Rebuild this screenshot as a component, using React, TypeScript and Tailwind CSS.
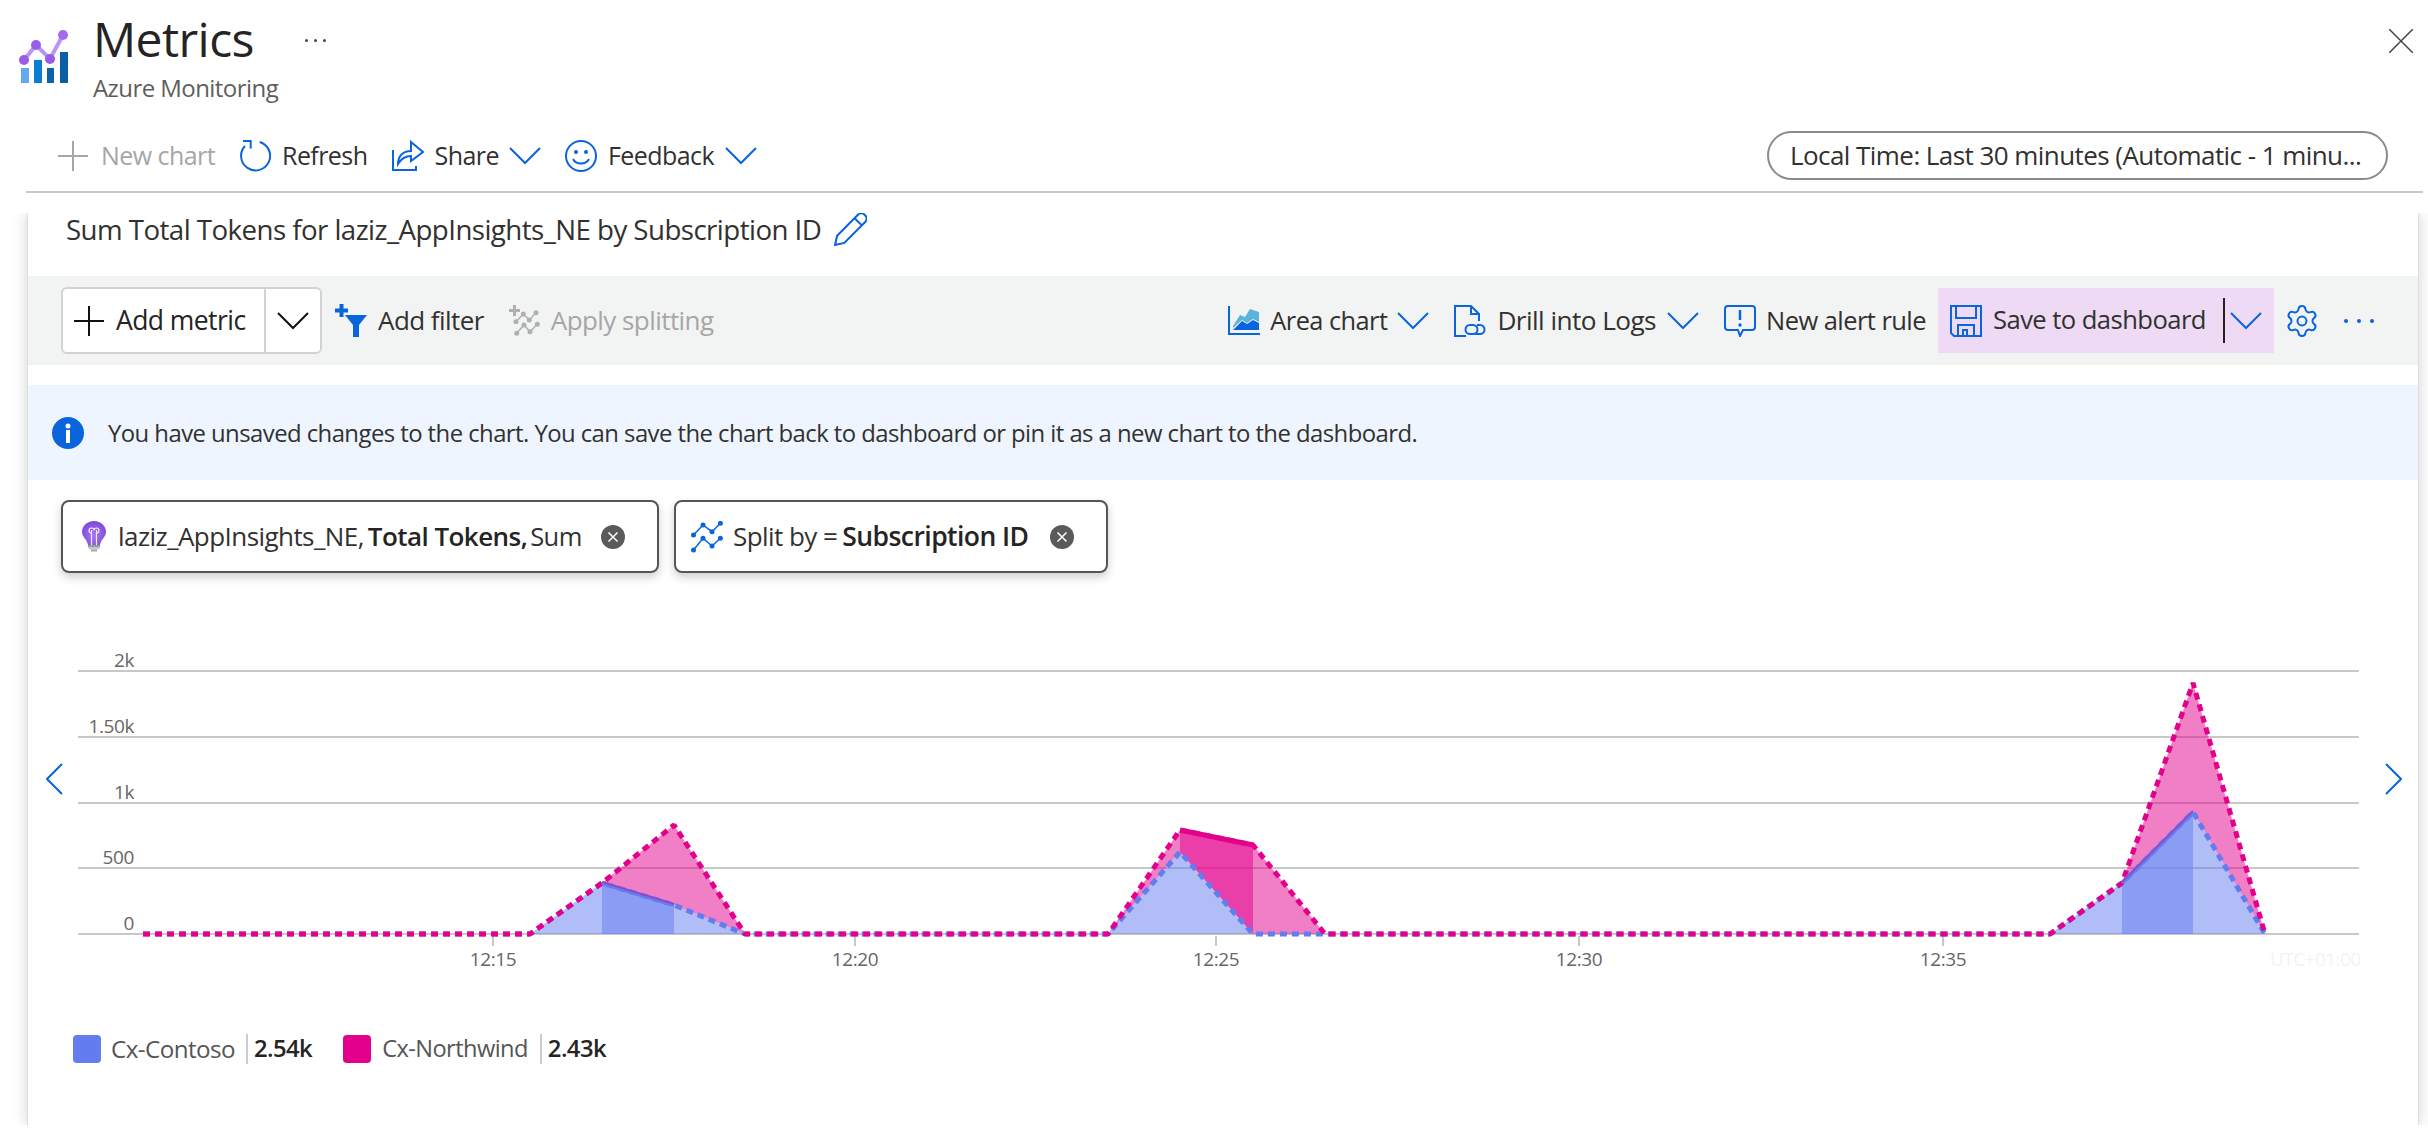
import { Settings } from 'lucide-react';

const blue = '#0a64dc';

function Chevron({ className = 'w-[32px] h-[18px]', color = blue }: { className?: string; color?: string }) {
  return (
    <svg viewBox="0 0 32 18" className={className} fill="none" stroke={color} strokeWidth="2">
      <path d="M1 1 L16 16 L31 1" />
    </svg>
  );
}

function LogoIcon() {
  return (
    <svg viewBox="18 30 54 55" className="w-[54px] h-[55px]">
      <rect x="21" y="68" width="8" height="15" fill="#64a8f0" />
      <rect x="34" y="60" width="8" height="23" fill="#0a7cd2" />
      <rect x="47" y="68" width="7" height="15" fill="#0a62a8" />
      <rect x="60" y="52" width="8" height="31" fill="#0a5ea8" />
      <polyline points="24,60 36,45 50,59 63,35" fill="none" stroke="#b796f9" strokeWidth="4" />
      <circle cx="24" cy="60" r="5" fill="#9a5be6" />
      <circle cx="36" cy="45" r="5" fill="#9a5be6" />
      <circle cx="50" cy="59" r="5" fill="#9a5be6" />
      <circle cx="63" cy="35" r="5" fill="#a46bee" />
    </svg>
  );
}

function PlusIcon({ color, size = 'w-[30px] h-[30px]' }: { color: string; size?: string }) {
  return (
    <svg viewBox="0 0 30 30" className={size} stroke={color} strokeWidth="2">
      <path d="M15 0V30M0 15H30" />
    </svg>
  );
}

function RefreshIcon() {
  return (
    <svg viewBox="0 0 32 32" className="w-[32px] h-[32px]" fill="none" stroke={blue} strokeWidth="2">
      <path d="M20.7 2 A14.5 14.5 0 1 1 6 6" />
      <path d="M4 1 H11.7 V8.5" />
    </svg>
  );
}

function ShareIcon() {
  return (
    <svg viewBox="0 0 32 32" className="w-[32px] h-[32px]" fill="none" stroke={blue} strokeWidth="2">
      <path d="M1 10 V30 H24 V26" />
      <path d="M6 24 C6 16 11 11 19 11 V2 L31 12 L19 21 V16 C13 16 9 19 6 24 Z" />
    </svg>
  );
}

function SmileIcon() {
  return (
    <svg viewBox="0 0 32 32" className="w-[32px] h-[32px]" fill="none" stroke={blue} strokeWidth="2">
      <circle cx="16" cy="16" r="15" />
      <circle cx="11" cy="12" r="2" fill={blue} stroke="none" />
      <circle cx="21" cy="12" r="2" fill={blue} stroke="none" />
      <path d="M8 19 C11 25 21 25 24 19" />
    </svg>
  );
}

function FilterIcon() {
  return (
    <svg viewBox="0 0 32 33" className="w-[32px] h-[33px]" fill={blue}>
      <path d="M4.5 0h4v4.5h4.5v4h-4.5v4.5h-4v-4.5h-4.5v-4h4.500z" />
      <path d="M10 11 H32 L24 21 V33 H18 V21 Z" />
    </svg>
  );
}

const grayDots = [
  [[7, 16.7], [14.3, 9], [20.3, 15], [27, 7.7]],
  [[7.7, 28.3], [15, 20], [21, 26.7], [28.3, 19.3]],
];
const blueDots = [
  [[2.5, 14], [12, 4], [21, 10.7], [29.4, 2.3]],
  [[2.5, 29], [12, 17.3], [21, 25], [29.4, 17.3]],
];

function SplitIcon({ color, plus }: { color: string; plus?: boolean }) {
  const rows = plus ? grayDots : blueDots;
  return (
    <svg viewBox="0 0 32 32" className="w-[32px] h-[32px]" fill={color} stroke={color} strokeWidth="1.5">
      {plus && <path d="M5.5 0V11M0 5.5H11" strokeWidth="3" />}
      {rows.map((row) => (
        <g key={row[0][1]}>
          <polyline points={row.map((p) => p.join(',')).join(' ')} fill="none" />
          {row.map(([cx, cy]) => <circle key={cx} cx={cx} cy={cy} r="2.5" stroke="none" />)}
        </g>
      ))}
    </svg>
  );
}

function AreaIcon() {
  return (
    <svg viewBox="0 0 32 29" className="w-[32px] h-[29px]">
      <path d="M5 20 L12 9 L17 11 L22 3 L31 6 V16 L25 13 L19 17 L14 14 L5 22Z" fill="#5ab4dc" />
      <path d="M5 24 L14 15 L19 18 L25 14 L31 17 V24Z" fill={blue} />
      <path d="M1 0 V28 H32" fill="none" stroke={blue} strokeWidth="2" />
    </svg>
  );
}

function DrillIcon() {
  return (
    <svg viewBox="0 0 32 32" className="w-[32px] h-[32px]" fill="none" stroke={blue} strokeWidth="2">
      <path d="M12 31 H1 V1 H17 L25 9 V16" />
      <path d="M17 1 V9 H25" />
      <path d="M19 20 H16 A4.5 4.5 0 0 0 16 29 H19 A4.5 4.5 0 0 0 19 20" />
      <path d="M21 29 H26 A4.5 4.5 0 0 0 26 20 H23" />
    </svg>
  );
}

function AlertIcon() {
  return (
    <svg viewBox="0 0 32 32" className="w-[32px] h-[32px]" fill="none" stroke={blue} strokeWidth="2">
      <path d="M4 1 H28 A3 3 0 0 1 31 4 V22 A3 3 0 0 1 28 25 H19 L16 31 L14 25 H4 A3 3 0 0 1 1 22 V4 A3 3 0 0 1 4 1 Z" />
      <path d="M16 5 V15" strokeWidth="2.5" />
      <circle cx="16" cy="20" r="1.7" fill={blue} stroke="none" />
    </svg>
  );
}

function SaveIcon() {
  return (
    <svg viewBox="0 0 32 32" className="w-[32px] h-[32px]" fill="none" stroke={blue} strokeWidth="2">
      <path d="M1 1 H31 V31 H4 L1 28 Z" />
      <path d="M6 1 V13 H26 V1" />
      <path d="M8 31 V20 H24 V31" />
      <path d="M13 31 V25 H17 V31" />
    </svg>
  );
}

function InfoIcon() {
  return (
    <svg viewBox="0 0 32 32" className="w-[32px] h-[32px]">
      <circle cx="16" cy="16" r="16" fill={blue} />
      <circle cx="16" cy="9" r="2.5" fill="#fff" />
      <rect x="14" y="13" width="4" height="13" fill="#fff" />
    </svg>
  );
}

function BulbIcon() {
  return (
    <svg viewBox="0 0 24 31" className="w-[24px] h-[31px]">
      <defs>
        <radialGradient id="bulbGlow" cx="50%" cy="60%" r="60%">
          <stop offset="0%" stopColor="#a678f0" />
          <stop offset="100%" stopColor="#7c48d8" />
        </radialGradient>
      </defs>
      <path d="M12 0 C5 0 0 5 0 11 C0 16 5 18 6 24 H18 C19 18 24 16 24 11 C24 5 19 0 12 0Z" fill="url(#bulbGlow)" />
      <path d="M9.5 24 V9 M14.5 24 V9 M9.5 12 A2.5 2.5 0 1 1 12 9.5 A2.5 2.5 0 1 1 14.5 12" fill="none" stroke="#f0e4ff" strokeWidth="1.2" />
      <rect x="6" y="24" width="12" height="2.5" fill="#9a9a9a" />
      <rect x="7" y="26.5" width="10" height="2" fill="#c4c4c4" />
      <rect x="9" y="28.5" width="6" height="2" fill="#a8a8a8" />
    </svg>
  );
}

function RemoveIcon() {
  return (
    <svg viewBox="0 0 24 24" className="w-[24px] h-[24px] shrink-0">
      <circle cx="12" cy="12" r="12" fill="#5a5a5a" />
      <path d="M7.5 7.5L16.5 16.5M16.5 7.5L7.5 16.5" stroke="#fff" strokeWidth="1.5" />
    </svg>
  );
}

const gridLines = [
  { y: 671, label: '2k' },
  { y: 737, label: '1.50k' },
  { y: 803, label: '1k' },
  { y: 868, label: '500' },
  { y: 934, label: '0' },
];

const ticks = [
  { x: 493, label: '12:15' },
  { x: 855, label: '12:20' },
  { x: 1216, label: '12:25' },
  { x: 1579, label: '12:30' },
  { x: 1943, label: '12:35' },
];

const contosoLine = '143,934 530,934 602,883 674,905 745,934 1108,934 1180,852 1253,934 2050,934 2122,883 2193,812 2265,934';
const northwindLine = '143,934 530,934 602,883 674,825 745,934 1108,934 1180,830 1253,845 1325,934 2050,934 2122,883 2193,683 2265,934';

const blueAreas = [
  '530,934 602,883 674,905 745,934',
  '1108,934 1180,852 1253,934',
  '2050,934 2122,883 2193,812 2265,934',
  '602,934 602,883 674,905 674,934',
  '2122,934 2122,883 2193,812 2193,934',
];

const pinkAreas = [
  '602,883 674,825 745,934 674,905',
  '1108,934 1180,830 1253,845 1325,934 1253,934 1180,852',
  '2122,883 2193,683 2265,934 2193,812',
  '1180,830 1253,845 1253,934 1180,852',
];

function Chart() {
  return (
    <div className="relative h-[340px]">
      <svg viewBox="28 640 2391 340" className="w-[2391px] h-[340px]">
        {gridLines.map((g) => (
          <g key={g.y}>
            <line x1="78" x2="2359" y1={g.y} y2={g.y} stroke="#c8c8c8" strokeWidth="2" />
            <text x="134" y={g.y - 4} textAnchor="end" fontSize="19" fill="#666" letterSpacing="-0.4">{g.label}</text>
          </g>
        ))}
        {ticks.map((t) => (
          <g key={t.x}>
            <line x1={t.x} x2={t.x} y1="936" y2="946" stroke="#c8c8c8" strokeWidth="2" />
            <text x={t.x} y="966" textAnchor="middle" fontSize="19" fill="#666" letterSpacing="-0.4">{t.label}</text>
          </g>
        ))}
        <text x="2270" y="966" fontSize="19" fill="#f3f3f3">UTC+01:00</text>
        {blueAreas.map((p) => <polygon key={p} points={p} fill="#637cef" fillOpacity="0.5" />)}
        {pinkAreas.map((p) => <polygon key={p} points={p} fill="#e3008c" fillOpacity="0.5" />)}
        <polyline points={contosoLine} fill="none" stroke="#637cef" strokeWidth="5" strokeDasharray="7 5" strokeLinejoin="bevel" />
        <polyline points={northwindLine} fill="none" stroke="#e3008c" strokeWidth="5" strokeDasharray="7 5" strokeLinejoin="bevel" />
        <polyline points="602,883 674,905" fill="none" stroke="#637cef" strokeWidth="4" />
        <polyline points="602,882 674,904" fill="none" stroke="#a03cb8" strokeWidth="1.5" />
        <polyline points="2122,883 2193,812" fill="none" stroke="#637cef" strokeWidth="4" />
        <polyline points="2122,882 2193,811" fill="none" stroke="#a03cb8" strokeWidth="1.5" />
        <polyline points="1180,830 1253,845" fill="none" stroke="#e3008c" strokeWidth="5" />
      </svg>
      <button type="button" className="absolute left-[18px] top-[123px]">
        <svg viewBox="0 0 17 32" className="w-[17px] h-[32px]" fill="none" stroke={blue} strokeWidth="2"><path d="M16 1 L1 16 L16 31" /></svg>
      </button>
      <button type="button" className="absolute right-[16px] top-[123px]">
        <svg viewBox="0 0 17 32" className="w-[17px] h-[32px]" fill="none" stroke={blue} strokeWidth="2"><path d="M1 1 L16 16 L1 31" /></svg>
      </button>
    </div>
  );
}

export default function App() {
  return (
    <div className="w-[2428px] h-[1136px] overflow-hidden bg-white text-[#323130] tracking-[-0.035em] whitespace-nowrap font-['Open_Sans',sans-serif]">
      {/* Blade header */}
      <div className="h-[119px] flex items-start pl-[18px] pr-[15px]">
        <div className="mt-[30px]"><LogoIcon /></div>
        <div className="ml-[21px]">
          <h1 className="text-[48px] leading-[62px] font-normal mt-[8px] text-[#252423]">Metrics</h1>
          <p className="text-[24px] leading-[28px] text-[#605e5c] mt-[4px]">Azure Monitoring</p>
        </div>
        <div className="ml-[27px] mt-[39px] flex gap-[6px]">
          <span className="w-[3px] h-[3px] rounded-full bg-[#444]" />
          <span className="w-[3px] h-[3px] rounded-full bg-[#444]" />
          <span className="w-[3px] h-[3px] rounded-full bg-[#444]" />
        </div>
        <svg viewBox="0 0 24 24" className="w-[24px] h-[24px] ml-auto mt-[29px]" stroke="#444" strokeWidth="1.5">
          <path d="M0 0L24 24M24 0L0 24" />
        </svg>
      </div>

      {/* Command bar */}
      <div className="h-[74px] ml-[26px] mr-[5px] border-b-2 border-[#c8c8c8] flex items-center pl-[32px] pr-[35px] text-[25px] pt-[2px]">
        <PlusIcon color="#a6a6a6" />
        <span className="ml-[13px] text-[#a6a6a6]">New chart</span>
        <div className="ml-[24px]"><RefreshIcon /></div>
        <span className="ml-[11px]">Refresh</span>
        <div className="ml-[25px]"><ShareIcon /></div>
        <span className="ml-[10px]">Share</span>
        <div className="ml-[10px]"><Chevron /></div>
        <div className="ml-[24px]"><SmileIcon /></div>
        <span className="ml-[11px]">Feedback</span>
        <div className="ml-[11px]"><Chevron /></div>
        <div className="ml-auto w-[621px] h-[49px] -mt-[1px] rounded-full border-2 border-[#8a8a8a] flex items-center pl-[21px] text-[26px]">
          Local Time: Last 30 minutes (Automatic - 1 minu...
        </div>
      </div>

      {/* Chart panel */}
      <div className="mt-[20px] h-[912px] overflow-hidden">
        <div className="ml-[27px] w-[2392px] h-full bg-white border-l border-r border-[#dedede] shadow-[0_0_14px_rgba(0,0,0,0.18)]">
          <div className="h-[63px] pl-[38px] flex items-start text-[27.7px] leading-[32px]">
            <span>Sum Total Tokens for laziz_AppInsights_NE by Subscription ID</span>
            <svg viewBox="0 0 32 32" className="w-[33px] h-[33px] ml-[13px]" fill="none" stroke={blue} strokeWidth="2">
              <path d="M1 31 L3 22 L23 2 A4 4 0 0 1 30 9 L10 29 Z M20 5 L27 12" />
            </svg>
          </div>

          <div className="h-[89px] bg-[#f2f4f4] flex items-center pl-[33px] text-[26px]">
            <div className="w-[261px] h-[67px] bg-white border-2 border-[#d2d2d2] rounded-[6px] flex items-center">
              <div className="ml-[11px]"><PlusIcon color="#111" /></div>
              <span className="ml-[12px] font-medium text-[#252423] text-[26.5px]">Add metric</span>
              <div className="ml-auto w-[56px] h-full border-l-2 border-[#d2d2d2] flex items-center justify-center">
                <Chevron color="#111" />
              </div>
            </div>
            <div className="ml-[13px]"><FilterIcon /></div>
            <span className="ml-[11px]">Add filter</span>
            <div className="ml-[25px]"><SplitIcon color="#b0b0b0" plus /></div>
            <span className="ml-[10px] text-[#a6a6a6]">Apply splitting</span>

            <div className="ml-auto flex items-center">
              <AreaIcon />
              <span className="ml-[10px] text-[25.4px]">Area chart</span>
              <div className="ml-[10px]"><Chevron /></div>
              <div className="ml-[25px]"><DrillIcon /></div>
              <span className="ml-[11px] text-[26.2px]">Drill into Logs</span>
              <div className="ml-[11px]"><Chevron /></div>
              <div className="ml-[25px]"><AlertIcon /></div>
              <span className="ml-[10px] text-[25.5px]">New alert rule</span>
              <div className="ml-[12px] w-[336px] h-[65px] bg-[#eedaf5] flex items-center pl-[12px]">
                <SaveIcon />
                <span className="ml-[11px] text-[25.6px]">Save to dashboard</span>
                <div className="ml-auto w-[2px] h-[45px] bg-[#222]" />
                <div className="ml-[5px] mr-[12px]"><Chevron /></div>
              </div>
              <Settings className="ml-[10px] w-[36px] h-[36px]" color={blue} strokeWidth={1.3} />
              <div className="ml-[24px] mr-[44px] flex gap-[9px]">
                <span className="w-[4px] h-[4px] rounded-full bg-[#0a64dc]" />
                <span className="w-[4px] h-[4px] rounded-full bg-[#0a64dc]" />
                <span className="w-[4px] h-[4px] rounded-full bg-[#0a64dc]" />
              </div>
            </div>
          </div>

          <div className="mt-[20px] h-[95px] bg-[#eef5fe] flex items-center pl-[24px] text-[23.9px]">
            <InfoIcon />
            <span className="ml-[24px]">You have unsaved changes to the chart. You can save the chart back to dashboard or pin it as a new chart to the dashboard.</span>
          </div>

          <div className="mt-[20px] pl-[33px] flex gap-[15px] text-[26px]">
            <div className="w-[598px] h-[73px] rounded-[8px] border-2 border-[#555] shadow-[0_4px_10px_rgba(0,0,0,0.2)] flex items-center pl-[19px] pr-[32px]">
              <BulbIcon />
              <span className="ml-[12px]">laziz_AppInsights_NE,</span>
              <span className="ml-[4px] font-semibold text-[#252423]">Total Tokens,</span>
              <span className="ml-[3px] text-[25.5px]">Sum</span>
              <div className="ml-auto"><RemoveIcon /></div>
            </div>
            <div className="w-[434px] h-[73px] rounded-[8px] border-2 border-[#555] shadow-[0_4px_10px_rgba(0,0,0,0.2)] flex items-center pl-[15px] pr-[32px]">
              <SplitIcon color={blue} />
              <span className="ml-[10px]">Split by =</span>
              <span className="ml-[5px] font-semibold text-[#252423] text-[26.5px]">Subscription ID</span>
              <div className="ml-auto"><RemoveIcon /></div>
            </div>
          </div>

          <div className="mt-[67px]"><Chart /></div>

          <div className="mt-[54px] pl-[45px] flex items-center h-[30px] text-[24.2px]">
            <span className="w-[28px] h-[28px] rounded-[4px] bg-[#637cef]" />
            <span className="ml-[10px] text-[#555]">Cx-Contoso</span>
            <span className="ml-[11px] w-[2px] h-[30px] bg-[#ccc]" />
            <span className="ml-[6px] font-semibold text-[#252423] text-[23.8px]">2.54k</span>
            <span className="ml-[31px] w-[28px] h-[28px] rounded-[4px] bg-[#e3008c]" />
            <span className="ml-[11px] text-[#555] text-[23.6px]">Cx-Northwind</span>
            <span className="ml-[12px] w-[2px] h-[30px] bg-[#ccc]" />
            <span className="ml-[6px] font-semibold text-[#252423] text-[23.8px]">2.43k</span>
          </div>
        </div>
      </div>
    </div>
  );
}
